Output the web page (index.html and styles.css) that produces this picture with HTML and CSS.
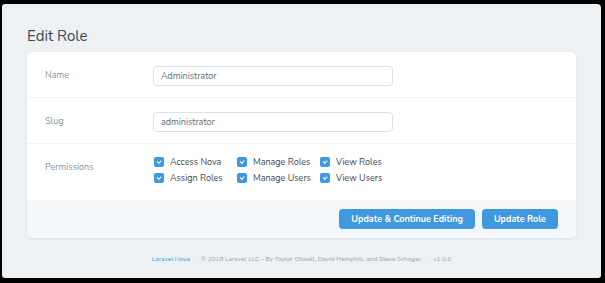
FILE: index.html
```html
<!DOCTYPE html>
<html lang="en">
<head>
  <meta charset="UTF-8">
  <title>Edit Role</title>
  <link rel="stylesheet" href="styles.css">
</head>
<body>
  <div class="screen">
    <h1>Edit Role</h1>

    <div class="card">
      <div class="row">
        <label class="label">Name</label>
        <div class="field"><input class="input" type="text" value="Administrator"></div>
      </div>

      <div class="row">
        <label class="label">Slug</label>
        <div class="field"><input class="input" type="text" value="administrator"></div>
      </div>

      <div class="row perms">
        <label class="label">Permissions</label>
        <div class="checks">
          <span class="check"><i class="box"></i>Access Nova</span>
          <span class="check"><i class="box"></i>Manage Roles</span>
          <span class="check"><i class="box"></i>View Roles</span>
          <span class="check"><i class="box"></i>Assign Roles</span>
          <span class="check"><i class="box"></i>Manage Users</span>
          <span class="check"><i class="box"></i>View Users</span>
        </div>
      </div>

      <div class="actions">
        <button class="btn">Update &amp; Continue Editing</button>
        <button class="btn">Update Role</button>
      </div>
    </div>

    <div class="footer">
      <a href="#">Laravel Nova</a>
      <span class="dot">&middot;</span>
      &copy; 2018 Laravel LLC - By Taylor Otwell, David Hemphill, and Steve Schoger.
      <span class="dot">&middot;</span>
      v1.0.6
    </div>
  </div>
</body>
</html>
```

FILE: styles.css
```css
html, body {
  margin: 0;
  padding: 0;
  background: #000;
}

body {
  font-family: 'Nunito', 'Lato', 'Noto Sans', sans-serif;
  color: #3d4852;
}

.screen {
  margin: 4px 4px 0 2px;
  height: 274px;
  box-sizing: border-box;
  padding: 23px 25px 0 25px;
  background: #eef1f4;
  border-radius: 3px 4px 3px 3px;
}

h1 {
  margin: 0 0 7px 0;
  font-size: 15px;
  line-height: 18px;
  font-weight: 400;
  color: #3d4852;
}

.card {
  background: #fff;
  border-radius: 5px;
  box-shadow: 0 1px 3px rgba(0, 0, 0, 0.08);
  overflow: hidden;
}

.row {
  display: flex;
  align-items: center;
  height: 45px;
  padding: 0 18px;
  border-bottom: 1px solid #f1f4f7;
}

.label {
  width: 108px;
  font-size: 9px;
  color: #8795a1;
}

.input {
  width: 240px;
  height: 20px;
  box-sizing: border-box;
  padding: 0 7px;
  border: 1px solid #dae1e7;
  border-radius: 4px;
  font-family: inherit;
  font-size: 9px;
  color: #606f7b;
  outline: none;
}

.perms {
  height: 56px;
  align-items: flex-start;
  box-sizing: border-box;
  padding-top: 12px;
  border-bottom: 0;
}

.perms .label {
  margin-top: 5px;
}

.checks {
  display: grid;
  grid-template-columns: 83px 83px 83px;
  row-gap: 4px;
  margin-left: 1px;
}

.check {
  display: flex;
  align-items: center;
  font-size: 9px;
  color: #3d4852;
}

.box {
  position: relative;
  width: 10px;
  height: 10px;
  margin-right: 6px;
  background: #4099de;
  border-radius: 2px;
}

.box::after {
  content: '';
  position: absolute;
  left: 3px;
  top: 3px;
  width: 3px;
  height: 1.5px;
  border-left: 1px solid #fff;
  border-bottom: 1px solid #fff;
  transform: rotate(-45deg);
}

.actions {
  display: flex;
  justify-content: flex-end;
  gap: 7px;
  height: 38px;
  align-items: center;
  padding: 0 18px;
  background: #f4f7fa;
}

.btn {
  height: 20px;
  padding: 0 12px;
  border: 0;
  border-radius: 4px;
  background: #4099de;
  color: #fff;
  font-family: inherit;
  font-size: 9px;
  font-weight: 700;
}

.footer {
  margin-top: 16px;
  text-align: center;
  font-size: 6.5px;
  color: #9aa5b0;
}

.footer a {
  color: #4099de;
  text-decoration: none;
}

.dot {
  margin: 0 3px;
}
```
